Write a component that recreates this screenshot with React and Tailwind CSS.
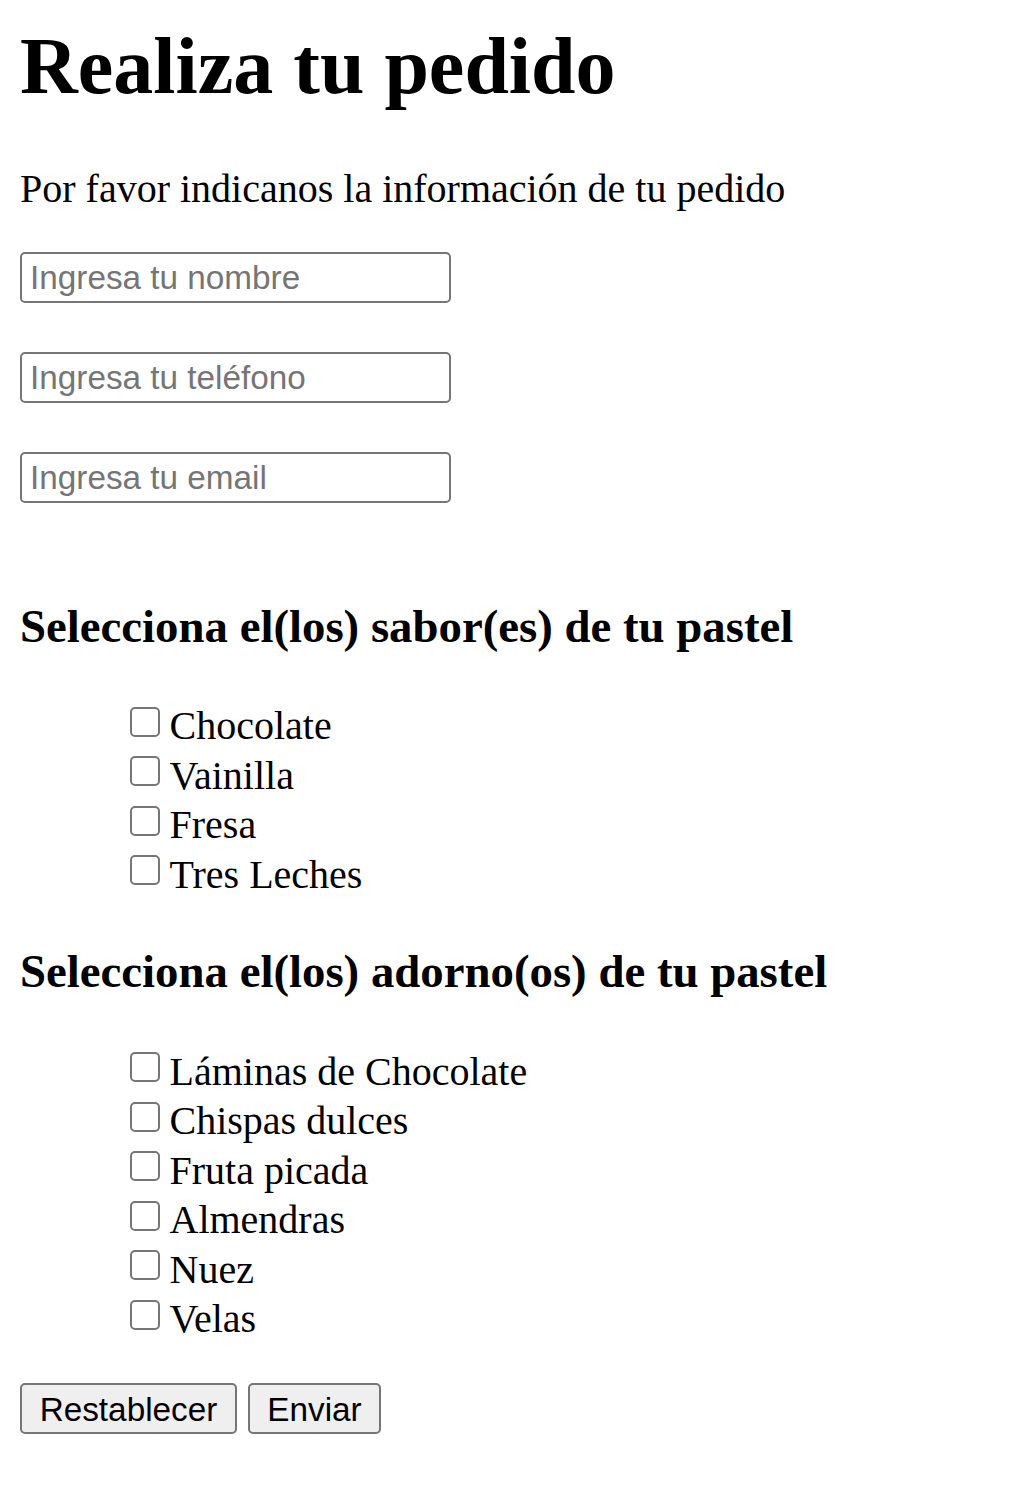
import React from 'react';

const sabores = ['Chocolate', 'Vainilla', 'Fresa', 'Tres Leches'];
const adornos = ['Láminas de Chocolate', 'Chispas dulces', 'Fruta picada', 'Almendras', 'Nuez', 'Velas'];

function CheckList({ items }) {
  return (
    <ul className="mt-[46.8px] pl-[110px]">
      {items.map((item) => (
        <li key={item} className="flex items-start h-[49.5px] leading-[51px]">
          <input
            type="checkbox"
            className="appearance-none mt-[6.5px] w-[30px] h-[30px] border-[2.5px] border-[#767676] rounded-[5px] bg-white shrink-0"
          />
          <span className="ml-[9.5px] text-[40px]">{item}</span>
        </li>
      ))}
    </ul>
  );
}

export default function App() {
  const inputClass =
    "block w-[431px] h-[51px] border-[2.5px] border-[#767676] rounded-[5px] pl-[8px] pr-[5px] text-[33.3px] font-['Liberation_Sans',Arial,sans-serif] text-black placeholder:text-[#757575] outline-none";

  return (
    <div className="min-h-screen bg-white pl-[20px] pt-[20px] pb-[72px] font-['Liberation_Serif','Times_New_Roman',serif] text-black">
      <h1 className="text-[80px] font-bold leading-[92px]">Realiza tu pedido</h1>
      <p className="mt-[53.5px] text-[40px] leading-[46px]">Por favor indicanos la información de tu pedido</p>

      <form className="mt-[40.5px]">
        {/* datos de contacto */}
        <div className="flex flex-col gap-[49px]">
          <input type="text" placeholder="Ingresa tu nombre" className={inputClass} />
          <input type="tel" placeholder="Ingresa tu teléfono" className={inputClass} />
          <input type="email" placeholder="Ingresa tu email" className={inputClass} />
        </div>

        <h3 className="mt-[96.8px] text-[46.8px] font-bold leading-[53.8px]">Selecciona el(los) sabor(es) de tu pastel</h3>
        <CheckList items={sabores} />

        <h3 className="mt-[46.8px] text-[46.8px] font-bold leading-[53.8px]">Selecciona el(los) adorno(os) de tu pastel</h3>
        <CheckList items={adornos} />

        <div className="mt-[40px] flex gap-[11px]">
          <button
            type="reset"
            className="w-[217px] h-[51px] bg-[#efefef] border-[2.5px] border-[#767676] rounded-[5px] text-[33.3px] font-['Liberation_Sans',Arial,sans-serif] text-black"
          >
            Restablecer
          </button>
          <button
            type="submit"
            className="w-[133px] h-[51px] bg-[#efefef] border-[2.5px] border-[#767676] rounded-[5px] text-[33.3px] font-['Liberation_Sans',Arial,sans-serif] text-black"
          >
            Enviar
          </button>
        </div>
      </form>
    </div>
  );
}
